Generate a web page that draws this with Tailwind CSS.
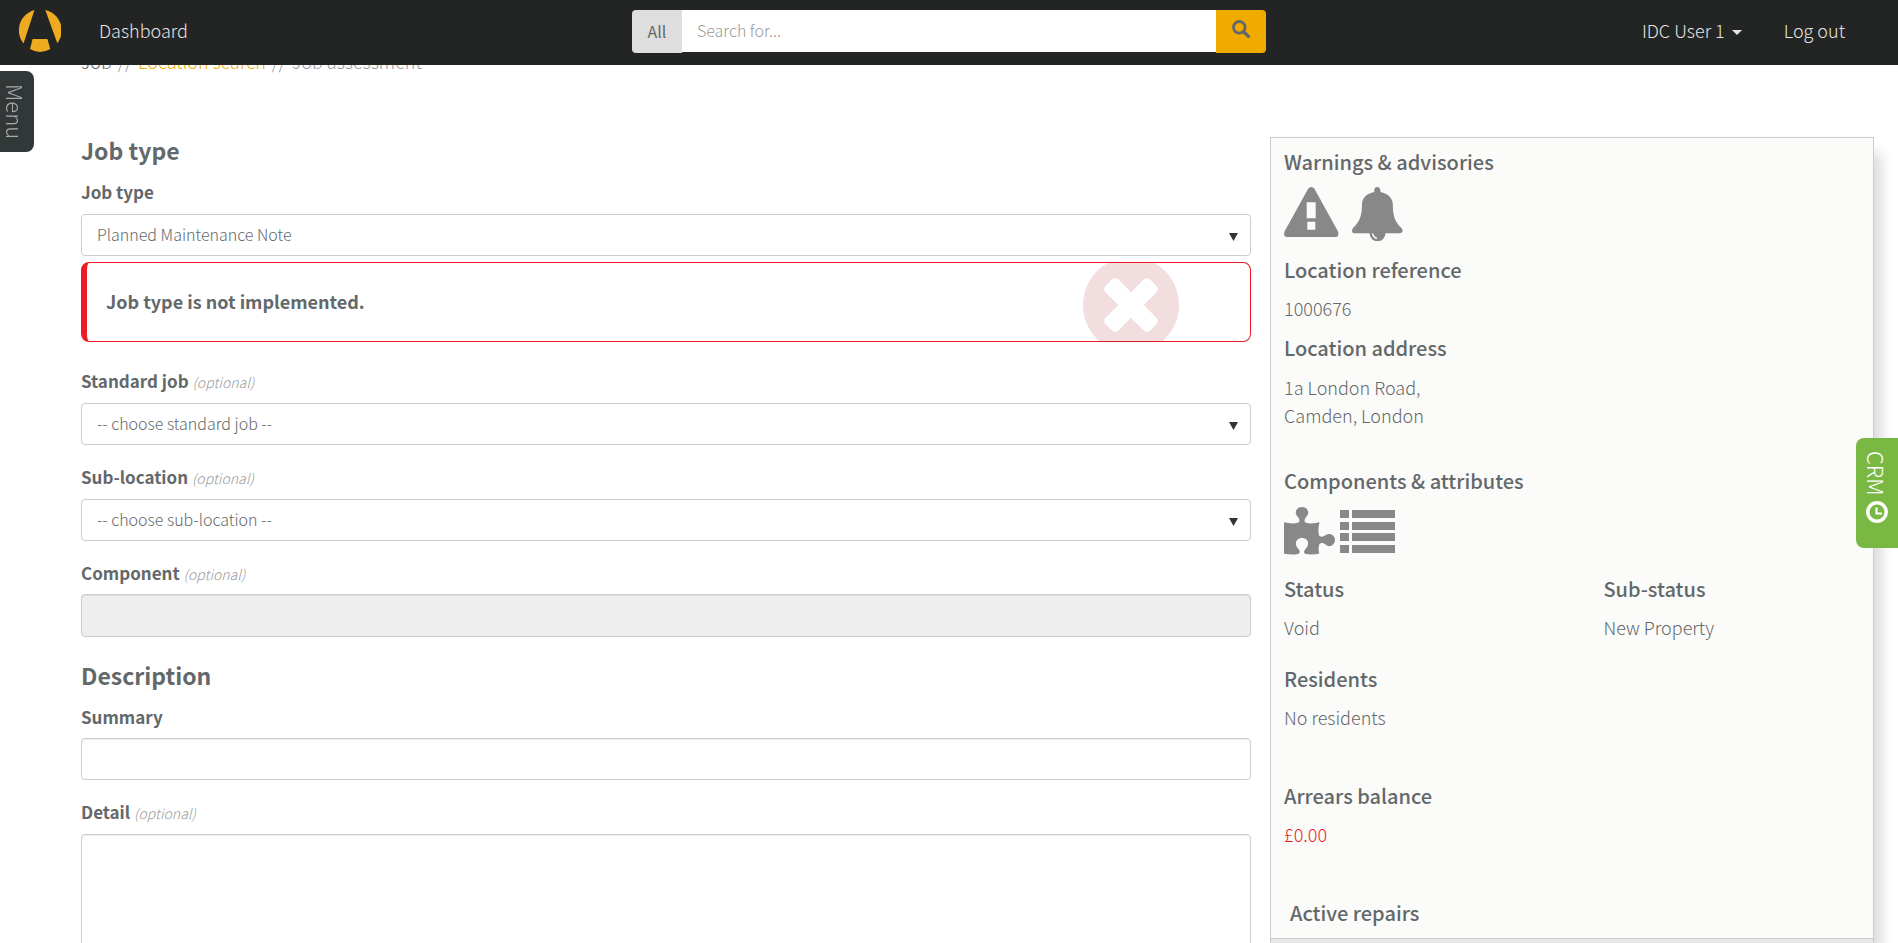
<!DOCTYPE html>
<html lang="en">
<head>
<meta charset="utf-8">
<title>Job assessment</title>
<script src="https://cdn.jsdelivr.net/npm/@tailwindcss/browser@4"></script>
</head>
<body class="h-screen overflow-hidden bg-white font-['Noto_Sans_CJK_SC','Open_Sans',sans-serif] text-[18px] leading-7 font-light text-[#63686a]">

<header class="fixed inset-x-0 top-0 z-20 grid h-[65px] grid-cols-[1fr_minmax(0,634px)_1fr] items-start bg-[#232524] text-[#e4e4e4]">
  <nav class="flex items-start pt-[10px] pl-[19px]" aria-label="Main">
    <a href="#" aria-label="Home">
      <svg class="block h-[42px] w-[42px]" viewBox="0 0 42 42" fill="#eeaa21">
        <path d="M15.5 0 4.5 33.5A21 21 0 0 1 15.5 0Z"/>
        <path d="M26.3 0A21 21 0 0 1 38.3 33.3Z"/>
        <path d="M13.6 29H28.4L31.3 39Q21 45 11 39Z"/>
      </svg>
    </a>
    <a href="#" class="ml-[38px] pt-[6px]">Dashboard</a>
  </nav>
  <form class="flex pt-[10px]" role="search">
    <button type="button" class="h-[43px] w-[50px] rounded-l-[4px] bg-[#dedede] pb-[2px] text-[16px] font-normal text-[#63686a]">All</button>
    <input type="search" aria-label="Search" placeholder="Search for..." class="h-[42px] min-w-0 flex-1 bg-white px-[15px] pb-[2px] text-[16px] text-[#555] outline-none placeholder:text-[#999]">
    <button type="submit" aria-label="Search" class="flex h-[43px] w-[50px] justify-center rounded-r-[4px] bg-[#f0ab00] pt-[10px]">
      <svg class="h-[18px] w-[18px]" viewBox="0 0 18 18" fill="none" stroke="#63686a"><circle cx="7.3" cy="7.3" r="5.8" stroke-width="2.8"/><path d="m11.5 11.5 5 5" stroke-width="3.2" stroke-linecap="round"/></svg>
    </button>
  </form>
  <nav class="flex items-center justify-end gap-[42px] pt-4 pr-[53px]" aria-label="Account">
    <a href="#" class="flex items-center gap-[7px]">IDC User 1
      <svg class="mt-[5px] h-[5px] w-[10px]" viewBox="0 0 10 5" fill="currentColor"><path d="M0 0h10L5 5z"/></svg>
    </a>
    <a href="#">Log out</a>
  </nav>
</header>

<button type="button" class="fixed top-[71px] left-0 z-20 flex h-[81px] w-[34px] items-center justify-center rounded-r-[8px] bg-[#323738] pr-[2px] text-[22px] leading-7 text-[#a9abab] [writing-mode:vertical-rl]">Menu</button>
<button type="button" class="fixed top-[438px] right-0 z-20 flex h-[110px] w-[42px] items-center justify-center gap-[6px] rounded-l-[8px] bg-[#7ab844] pb-3 text-[22px] leading-7 text-white [writing-mode:vertical-rl]">CRM
  <svg class="h-[22px] w-[22px]" viewBox="0 0 22 22" fill="none" stroke="#fff"><circle cx="11" cy="11" r="9.2" stroke-width="3.4"/><path d="M10.5 6.5v6H16" stroke-width="2.2"/></svg>
</button>

<main class="pt-[47px] pr-6 pl-[81px]">
  <nav class="mb-[62px] flex gap-[6px] text-[#999]" aria-label="Breadcrumb"><a href="#" class="text-[#63686a]">Job</a><span>//</span><a href="#" class="text-[#f0ab00]">Location search</a><span>//</span><span>Job assessment</span></nav>

  <div class="grid grid-cols-[1170fr_604fr] items-start gap-[19px]">
    <form>
      <h2 class="mb-[15px] text-[23px] leading-[26px] font-bold">Job type</h2>

      <label for="type" class="mb-2 block h-7 text-[17px] font-bold">Job type</label>
      <div class="relative mb-[6px]">
        <select id="type" class="block h-[42px] w-full appearance-none rounded-[4px] border border-[#ccc] bg-white px-[15px] pb-[2px] text-[16px] outline-none"><option>Planned Maintenance Note</option></select>
        <svg class="pointer-events-none absolute top-[19px] right-[13px] h-[8px] w-[9px]" viewBox="0 0 9 8" fill="#333"><path d="M0 0h9L4.5 8z"/></svg>
      </div>

      <div role="alert" class="relative mb-[25px] flex h-[80px] items-center overflow-hidden rounded-[8px] border border-l-[6px] border-[#ed1c24] pb-[3px] pl-[19px] font-bold">
        <p>Job type is not implemented.</p>
        <svg class="absolute -top-[6px] right-[71px] h-24 w-24" viewBox="-48 -48 96 96"><circle r="48" fill="#f2dede"/><g fill="#fff"><rect x="-31.5" y="-9" width="63" height="18" rx="4.5" transform="rotate(45)"/><rect x="-31.5" y="-9" width="63" height="18" rx="4.5" transform="rotate(-45)"/></g></svg>
      </div>

      <label for="std" class="mb-2 block h-7 text-[17px] font-bold">Standard job <em class="text-[14px] font-light text-[#999]">(optional)</em></label>
      <div class="relative mb-[18px]">
        <select id="std" class="block h-[42px] w-full appearance-none rounded-[4px] border border-[#ccc] bg-white px-[15px] pb-[2px] text-[16px] outline-none"><option>-- choose standard job --</option></select>
        <svg class="pointer-events-none absolute top-[19px] right-[13px] h-[8px] w-[9px]" viewBox="0 0 9 8" fill="#333"><path d="M0 0h9L4.5 8z"/></svg>
      </div>

      <label for="sub" class="mb-2 block h-7 text-[17px] font-bold">Sub-location <em class="text-[14px] font-light text-[#999]">(optional)</em></label>
      <div class="relative mb-[18px]">
        <select id="sub" class="block h-[42px] w-full appearance-none rounded-[4px] border border-[#ccc] bg-white px-[15px] pb-[2px] text-[16px] outline-none"><option>-- choose sub-location --</option></select>
        <svg class="pointer-events-none absolute top-[19px] right-[13px] h-[8px] w-[9px]" viewBox="0 0 9 8" fill="#333"><path d="M0 0h9L4.5 8z"/></svg>
      </div>

      <label for="comp" class="mb-[7px] block h-7 text-[17px] font-bold">Component <em class="text-[14px] font-light text-[#999]">(optional)</em></label>
      <input id="comp" type="text" disabled class="mb-[25px] block h-[43px] w-full rounded-[4px] border border-[#ccc] bg-[#eee] px-[15px] text-[16px] shadow-[inset_0_1px_1px_rgba(0,0,0,0.075)]">

      <h2 class="mb-[15px] text-[23px] leading-[26px] font-bold">Description</h2>

      <label for="summary" class="mb-[7px] block h-7 text-[17px] font-bold">Summary</label>
      <input id="summary" type="text" class="mb-[18px] block h-[42px] w-full rounded-[4px] border border-[#ccc] px-[15px] text-[16px] shadow-[inset_0_1px_1px_rgba(0,0,0,0.075)] outline-none">

      <label for="detail" class="mb-2 block h-7 text-[17px] font-bold">Detail <em class="text-[14px] font-light text-[#999]">(optional)</em></label>
      <textarea id="detail" rows="6" class="block w-full rounded-[4px] border border-[#ccc] px-[15px] py-2 text-[16px] shadow-[inset_0_1px_1px_rgba(0,0,0,0.075)] outline-none"></textarea>
    </form>

    <aside class="border border-[#ccc] bg-[#fbfbf9] shadow-[12px_12px_12px_-4px_#ddd]">
      <div class="px-[13px] pt-[10px]">
        <h3 class="mb-[11px] text-[20px] leading-7 font-medium">Warnings &amp; advisories</h3>
        <div class="mb-[15px] flex h-[54px] items-start gap-[13px] text-[#888]">
          <svg class="h-[50px] w-[55px]" viewBox="0 0 55 50" fill="currentColor"><path fill-rule="evenodd" d="M24.3 1.6Q27.3-1.6 30.3 1.6L54 44.5Q55.5 49.5 51.5 50H3Q-1 49.5.5 44.5ZM22.7 15.3V31.3H31.7V15.3ZM23.3 34.7V42.7H31.3V34.7Z"/></svg>
          <svg class="h-[54px] w-[51px]" viewBox="0 0 51 54" fill="currentColor"><path d="M22.2 5V3.2Q22.5 0 25.3 0 28 .2 28.4 3.2V5C36 6.5 40.5 11 40.8 17 41 28 42 34 49.5 41 51.8 44 50 46 48 46.3H33.5A8 8 0 0 1 17.5 46.3H2.5C0 46-.8 44 1 41 8.5 34 9.8 28 10 17 10.3 11 14.5 6.5 22.2 5Z"/><path d="M20.5 46.5q.8 4 4.5 4.8" fill="none" stroke="#fbfbf9" stroke-width="1.3"/></svg>
        </div>
        <h3 class="mb-[10px] text-[20px] leading-7 font-medium">Location reference</h3>
        <p class="mb-[12px]">1000676</p>
        <h3 class="mb-[11px] text-[20px] leading-7 font-medium">Location address</h3>
        <p class="mb-[38px]">1a London Road,<br>Camden, London</p>
        <h3 class="mb-[12px] text-[20px] leading-7 font-medium">Components &amp; attributes</h3>
        <div class="mb-[19px] flex h-[49px] items-start gap-[5px] text-[#888]">
          <svg class="h-[48px] w-[51px]" viewBox="0 0 51 48" fill="currentColor"><path d="M0 15.3Q8 17.3 14 15.8C16.5 14.5 15.5 12 13.5 9.5 9.5 5 13 0 18 0S26.5 5 22.5 9.5C20.5 12 19.5 14.5 22 15.8Q28 17.3 35.6 15.3C34.3 20 34 24 35 28.3 36.5 30.5 39 29.8 41.5 28.3 46 25 51 28.5 51 33S46 41.5 41.5 37.5C39 35.5 36.5 35.5 35.3 37.5Q33.8 41 35.3 46.5 29 48 22 47C19 46 20 43.5 22 41.5 26 37 24 31 18 31S10 37 14 41.5C16 43.5 16.5 46 14 47Q8 48.3 0 46.8Z"/></svg>
          <svg class="mt-[3px] h-[43px] w-[55px]" viewBox="0 0 55 43" fill="currentColor"><path d="M0 0h9v8H0zM12 0h43v8H12zM0 12h9v8H0zM12 12h43v8H12zM0 23h9v8H0zM12 23h43v8H12zM0 35h9v8H0zM12 35h43v8H12z"/></svg>
        </div>
        <div class="mb-6 grid grid-cols-[320fr_257fr]">
          <div><h3 class="mb-[10px] text-[20px] leading-7 font-medium">Status</h3><p>Void</p></div>
          <div><h3 class="mb-[10px] text-[20px] leading-7 font-medium">Sub-status</h3><p>New Property</p></div>
        </div>
        <h3 class="mb-[10px] text-[20px] leading-7 font-medium">Residents</h3>
        <p class="mb-[51px]">No residents</p>
        <h3 class="mb-[10px] text-[20px] leading-7 font-medium">Arrears balance</h3>
        <p class="mb-[51px] text-[#ed1c24]">£0.00</p>
        <h3 class="mb-[11px] pl-[6px] text-[20px] leading-7 font-medium">Active repairs</h3>
      </div>
      <div class="h-16 border-t border-[#ccc] bg-[#e6e6e4]"></div>
    </aside>
  </div>
</main>
</body>
</html>
